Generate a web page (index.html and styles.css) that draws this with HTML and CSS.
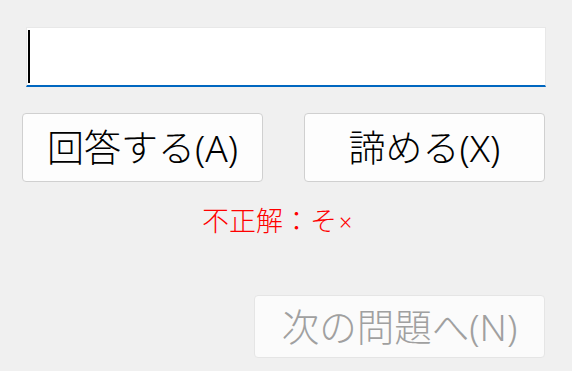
FILE: index.html
```html
<!DOCTYPE html>
<html lang="ja">
<head>
<meta charset="utf-8">
<link rel="stylesheet" href="styles.css">
</head>
<body>
<div class="app">
  <div class="textbox"><span class="caret"></span></div>
  <div class="actions">
    <button class="btn">回答する(A)</button>
    <button class="btn">諦める(X)</button>
  </div>
  <div class="message">不正解：そ<span class="mark">×</span></div>
  <div class="next-row">
    <button class="btn btn-next" disabled>次の問題へ(N)</button>
  </div>
</div>
</body>
</html>
```
FILE: styles.css
```css
html, body {
  margin: 0;
  padding: 0;
  background: #f0f0f0;
}
body {
  font-family: "Noto Sans", "Noto Sans CJK JP", sans-serif;
  font-weight: 300;
  width: 572px;
  height: 371px;
  overflow: hidden;
}
.app {
  padding: 27px 27px 0 22px;
}
.textbox {
  box-sizing: border-box;
  margin-left: 4px;
  margin-right: -1px;
  height: 60px;
  background: #ffffff;
  border: 1px solid #e8e8e8;
  border-bottom: 2px solid #0067c0;
  padding: 2px 0 0 1px;
  display: flex;
  align-items: flex-start;
}
.caret {
  display: block;
  width: 1.5px;
  height: 53px;
  background: #000;
}
.actions {
  margin-top: 26px;
  display: grid;
  grid-template-columns: 241px 241px;
  justify-content: space-between;
}
.btn {
  box-sizing: border-box;
  height: 69px;
  margin: 0;
  padding: 0;
  background: #fdfdfd;
  border: 1px solid #d0d0d0;
  border-radius: 4px;
  font-family: "Noto Sans", "Noto Sans CJK JP", sans-serif;
  font-weight: 300;
  font-size: 37px;
  line-height: 1;
  color: #000;
  display: flex;
  align-items: center;
  justify-content: center;
}
.message {
  margin-top: 25px;
  margin-left: 180px;
  height: 28px;
  line-height: 28px;
  font-size: 27px;
  color: #ff0000;
}
.mark {
  font-size: 23px;
  margin-left: 2px;
}
.next-row {
  margin-top: 60px;
  display: flex;
  justify-content: flex-end;
}
.btn-next {
  width: 291px;
  height: 63px;
  font-size: 37.5px;
  background: #fbfbfb;
  border-color: #e5e5e5;
  color: #a0a0a0;
}
```
